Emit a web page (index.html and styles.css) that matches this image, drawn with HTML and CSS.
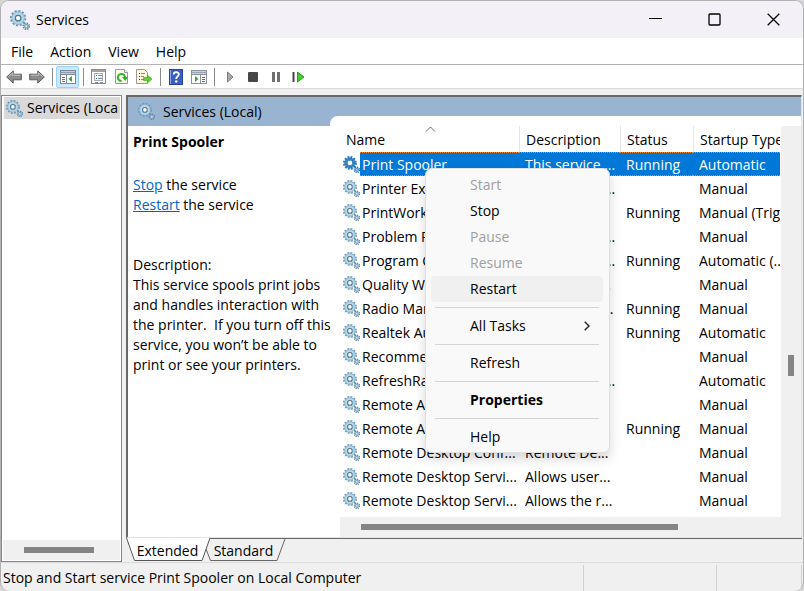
FILE: index.html
```html
<!DOCTYPE html>
<html lang="en">
<head>
    <meta charset="utf-8">
    <title>Services</title>
    <link rel="stylesheet" href="styles.css">
</head>
<body>
    <!-- shared icons -->
    <svg class="defs" width="0" height="0">
        <symbol id="gear" viewBox="0 0 16 16">
            <circle cx="6.5" cy="6.5" r="5.7" fill="none" stroke="#648fae" stroke-width="1.6" stroke-dasharray="1.7 1.28"/>
            <circle cx="6.5" cy="6.5" r="3.8" fill="#fff" stroke="#b4d8ea" stroke-width="3"/>
            <circle cx="6.5" cy="6.5" r="5" fill="none" stroke="#7ba5c1" stroke-width=".6"/>
            <circle cx="6.5" cy="6.5" r="2.2" fill="none" stroke="#54738c" stroke-width="1"/>
            <circle cx="13" cy="13" r="2.4" fill="none" stroke="#5f88a5" stroke-width="1.4" stroke-dasharray="1.1 .78"/>
            <circle cx="13" cy="13" r="1.4" fill="#dcebf4" stroke="#7fa9c4" stroke-width="1.2"/>
        </symbol>
        <symbol id="gear-selected" viewBox="0 0 16 16">
            <circle cx="6.5" cy="6.5" r="5.7" fill="none" stroke="#1f6fb4" stroke-width="1.6" stroke-dasharray="1.7 1.28"/>
            <circle cx="6.5" cy="6.5" r="3.8" fill="#fff" stroke="#4c9ad6" stroke-width="3"/>
            <circle cx="6.5" cy="6.5" r="3.8" fill="none" stroke="#1f6fb4" stroke-width="3" stroke-dasharray="1 1"/>
            <circle cx="13" cy="13" r="2.4" fill="none" stroke="#1f6fb4" stroke-width="1.4" stroke-dasharray="1.1 .78"/>
            <circle cx="13" cy="13" r="1.4" fill="#b9dbf3" stroke="#4c9ad6" stroke-width="1.2"/>
        </symbol>
        <symbol id="arrow" viewBox="0 0 16 14">
            <path d="M.7 7 7.2.9v3.3h8.1v5.6H7.2v3.3z" fill="#8c8c8c" stroke="#5c5c5c"/>
            <path d="M2.5 6.6 6.4 3v2.2h7.8" fill="none" stroke="#c4c4c4"/>
        </symbol>
    </svg>

    <div class="window">
        <header class="titlebar">
            <svg class="app-icon"><use href="#gear"/></svg>
            <h1>Services</h1>
            <div class="window-buttons">
                <button type="button" aria-label="Minimize"><svg width="13" height="13"><path d="M0 5.5h13" stroke="#000"/></svg></button>
                <button type="button" aria-label="Maximize"><svg width="13" height="13"><rect x="1" y="1" width="11" height="11" rx="1" fill="none" stroke="#000" stroke-width="1.3"/></svg></button>
                <button type="button" aria-label="Close"><svg width="13" height="13"><path d="M.7.7l11.6 11.6M12.3.7.7 12.3" stroke="#000" stroke-width="1.3"/></svg></button>
            </div>
        </header>

        <nav class="menubar">
            <button type="button">File</button>
            <button type="button">Action</button>
            <button type="button">View</button>
            <button type="button">Help</button>
        </nav>

        <div class="toolbar">
            <button type="button" aria-label="Back"><svg width="16" height="14"><use href="#arrow"/></svg></button>
            <button type="button" aria-label="Forward"><svg class="flip" width="16" height="14"><use href="#arrow"/></svg></button>
            <span class="sep"></span>
            <button type="button" class="active" aria-label="Show console tree">
                <svg width="16" height="14">
                    <rect x=".5" y=".5" width="15" height="13" fill="#fff" stroke="#7a8796"/>
                    <path d="M1 2.5h14" stroke="#8d9bab" stroke-width="2"/>
                    <path d="M1 4.5h14M6.5 5v8" stroke="#7a8796"/>
                    <path d="M2 7.5h3M2 9.5h3M2 11.5h3" stroke="#3c7cb8"/>
                    <path d="M12 6v6L8.5 9z" fill="#35ad22"/>
                </svg>
            </button>
            <span class="sep"></span>
            <button type="button" aria-label="Properties">
                <svg width="16" height="16">
                    <rect x=".5" y=".5" width="14" height="14" fill="#fff" stroke="#8a8a8a"/>
                    <path d="M1 2h13" stroke="#a5a5a5" stroke-width="2"/>
                    <rect x="3.5" y="4.5" width="8" height="7" fill="#fafafa" stroke="#a3adb8"/>
                    <path d="M5 6.5h1M5 9.5h1" stroke="#1c7ec2"/>
                    <path d="M7 6.5h4M7 9.5h4M4 13.5h3M9 13.5h3" stroke="#8a8a8a"/>
                </svg>
            </button>
            <button type="button" aria-label="Refresh">
                <svg width="14" height="16">
                    <path d="M.5.5h9l3 3v11H.5z" fill="#fffdf0" stroke="#999"/>
                    <path d="M9.5.5v3h3" fill="#fff" stroke="#999"/>
                    <path d="M6.5 12.1A3.6 3.6 0 1 1 10 8.2" fill="none" stroke="#2fb128" stroke-width="2"/>
                    <path d="M7 8h6L10.2 12z" fill="#2fb128"/>
                </svg>
            </button>
            <button type="button" aria-label="Export list">
                <svg width="17" height="16">
                    <path d="M.5.5h8l3 3v11H.5z" fill="#fff8dc" stroke="#999"/>
                    <path d="M3 4.5h1M3 7.5h1M3 10.5h1" stroke="#333"/>
                    <path d="M5 4.5h4M5 7.5h3M5 10.5h3" stroke="#8a8a8a"/>
                    <path d="M7.5 8.5h4V6l4.5 4-4.5 4v-2.5h-4z" fill="#63ce3b" stroke="#3ca41e" stroke-width=".6"/>
                </svg>
            </button>
            <span class="sep"></span>
            <button type="button" aria-label="Help">
                <svg width="14" height="16">
                    <rect x=".5" y=".5" width="13" height="15" fill="#3a5fc4" stroke="#27459c"/>
                    <path d="M1.5 1v14" stroke="#8fa8e8"/>
                    <path d="M4.7 5.5C4.7 2.4 9.8 2.4 9.8 5.3 9.8 7.4 7.2 7.3 7.2 10" fill="none" stroke="#fff" stroke-width="1.8"/>
                    <circle cx="7.2" cy="12.5" r="1.2" fill="#fff"/>
                </svg>
            </button>
            <button type="button" aria-label="Show action pane">
                <svg width="16" height="14">
                    <rect x=".5" y=".5" width="15" height="13" fill="#fff" stroke="#8a919a"/>
                    <path d="M1 2.5h14" stroke="#98a3b0" stroke-width="2"/>
                    <path d="M1 4.5h14M9.5 5v8" stroke="#8a919a"/>
                    <path d="M11 7.5h3M11 9.5h3M11 11.5h3" stroke="#3c7cb8"/>
                    <path d="M4 6v6l3.500-3z" fill="#35ad22"/>
                </svg>
            </button>
            <span class="sep"></span>
            <button type="button" aria-label="Start service"><svg width="8" height="12"><path d="M1.5 1v10L7 6z" fill="#aaa" stroke="#7c7c7c"/></svg></button>
            <button type="button" aria-label="Stop service"><svg width="10" height="10"><rect width="10" height="10" rx="1" fill="#484848"/></svg></button>
            <button type="button" aria-label="Pause service"><svg width="8" height="10"><path d="M1.5 0v10M6.5 0v10" stroke="#707070" stroke-width="3"/></svg></button>
            <button type="button" aria-label="Restart service"><svg width="13" height="12"><path d="M1.5 1v10" stroke="#444" stroke-width="2"/><path d="M5.5 1v10L12 6z" fill="#3fd02c" stroke="#2a9c1c"/></svg></button>
        </div>

        <main class="panes">
            <aside class="tree">
                <div class="tree-item"><svg class="icon"><use href="#gear"/></svg><span>Services (Local)</span></div>
                <div class="tree-space"></div>
                <div class="tree-scroll"><div class="thumb"></div></div>
            </aside>

            <section class="content">
                <div class="view">
                    <div class="view-head">
                        <h2><svg class="icon"><use href="#gear"/></svg>Services (Local)</h2>
                        <div class="notch"></div>
                    </div>

                    <div class="view-body">
                        <div class="details">
                            <h3>Print Spooler</h3>
                            <p><a href="#">Stop</a> the service<br><a href="#">Restart</a> the service</p>
                            <p class="description">Description:<br>
                                This service spools print jobs<br>
                                and handles interaction with<br>
                                the printer.&nbsp; If you turn off this<br>
                                service, you won’t be able to<br>
                                print or see your printers.</p>
                        </div>

                        <div class="list">
                            <div class="list-scroll">
                                <table>
                                    <colgroup>
                                        <col class="col-icon"><col class="col-name"><col class="col-desc"><col class="col-status"><col>
                                    </colgroup>
                                    <thead>
                                        <tr><th colspan="2" class="first">Name<svg class="sort" width="11" height="6"><path d="M1 5.5l4.500-4.500L10 5.500" fill="none" stroke="#666"/></svg></th><th>Description</th><th>Status</th><th>Startup Type</th></tr>
                                    </thead>
                                    <tbody>
                                        <tr class="selected"><td><svg class="icon"><use href="#gear-selected"/></svg></td><td>Print Spooler</td><td>This service ...</td><td>Running</td><td>Automatic</td></tr>
                                        <tr><td><svg class="icon"><use href="#gear"/></svg></td><td>Printer Extens...</td><td>This service ...</td><td></td><td>Manual</td></tr>
                                        <tr><td><svg class="icon"><use href="#gear"/></svg></td><td>PrintWorkflow...</td><td>Provides s...</td><td>Running</td><td>Manual (Trigg...</td></tr>
                                        <tr><td><svg class="icon"><use href="#gear"/></svg></td><td>Problem Rep...</td><td>This service ...</td><td></td><td>Manual</td></tr>
                                        <tr><td><svg class="icon"><use href="#gear"/></svg></td><td>Program Com...</td><td>This service ...</td><td>Running</td><td>Automatic (...</td></tr>
                                        <tr><td><svg class="icon"><use href="#gear"/></svg></td><td>Quality Wind...</td><td>Quality Win...</td><td></td><td>Manual</td></tr>
                                        <tr><td><svg class="icon"><use href="#gear"/></svg></td><td>Radio Manag...</td><td>Radio Mana...</td><td>Running</td><td>Manual</td></tr>
                                        <tr><td><svg class="icon"><use href="#gear"/></svg></td><td>Realtek Audio...</td><td>For cooper...</td><td>Running</td><td>Automatic</td></tr>
                                        <tr><td><svg class="icon"><use href="#gear"/></svg></td><td>Recommend...</td><td>Enables au...</td><td></td><td>Manual</td></tr>
                                        <tr><td><svg class="icon"><use href="#gear"/></svg></td><td>RefreshRateS...</td><td>This service ...</td><td></td><td>Automatic</td></tr>
                                        <tr><td><svg class="icon"><use href="#gear"/></svg></td><td>Remote Acc...</td><td>Creates a...</td><td></td><td>Manual</td></tr>
                                        <tr><td><svg class="icon"><use href="#gear"/></svg></td><td>Remote Acc...</td><td>Manages di...</td><td>Running</td><td>Manual</td></tr>
                                        <tr><td><svg class="icon"><use href="#gear"/></svg></td><td>Remote Desktop Conf...</td><td>Remote De...</td><td></td><td>Manual</td></tr>
                                        <tr><td><svg class="icon"><use href="#gear"/></svg></td><td>Remote Desktop Servi...</td><td>Allows user...</td><td></td><td>Manual</td></tr>
                                        <tr><td><svg class="icon"><use href="#gear"/></svg></td><td>Remote Desktop Servi...</td><td>Allows the r...</td><td></td><td>Manual</td></tr>
                                    </tbody>
                                </table>
                            </div>
                            <div class="vscroll"><div class="thumb"></div></div>
                            <div class="hscroll"><div class="thumb"></div></div>

                            <div class="context-menu" role="menu">
                                <button type="button" role="menuitem" disabled>Start</button>
                                <button type="button" role="menuitem">Stop</button>
                                <button type="button" role="menuitem" disabled>Pause</button>
                                <button type="button" role="menuitem" disabled>Resume</button>
                                <button type="button" role="menuitem" class="hover">Restart</button>
                                <hr>
                                <button type="button" role="menuitem">All Tasks<svg width="6" height="10"><path d="M.7.7 5 5 .7 9.3" fill="none" stroke="#222" stroke-width="1.4"/></svg></button>
                                <hr>
                                <button type="button" role="menuitem">Refresh</button>
                                <hr>
                                <button type="button" role="menuitem" class="default">Properties</button>
                                <hr>
                                <button type="button" role="menuitem">Help</button>
                            </div>
                        </div>
                    </div>
                </div>

                <div class="tabs">
                    <button type="button" class="tab current">
                        <svg width="86" height="24"><path d="M0 0 8 23H76L84 0z" fill="#fff"/><path d="M.5 0 8.5 22.5H76L84 0" fill="none" stroke="#555"/></svg>
                        <span>Extended</span>
                    </button>
                    <button type="button" class="tab">
                        <svg width="82" height="24"><path d="M2 10 6.5 21.5H73L81 0" fill="none" stroke="#666"/></svg>
                        <span>Standard</span>
                    </button>
                </div>
            </section>
        </main>

        <footer class="statusbar">
            <span class="status-text">Stop and Start service Print Spooler on Local Computer</span>
            <span class="status-cell"></span>
            <span class="status-cell small"></span>
        </footer>
    </div>
</body>
</html>
```

FILE: styles.css
```css
* {
    box-sizing: border-box;
}

body {
    margin: 0;
    background-color: #d6d6d6;
    font-family: "Open Sans", "Noto Sans", sans-serif;
    font-size: 14px;
    line-height: 20px;
    color: #000;
}

h1, h2, h3, p {
    margin: 0;
    font-size: 14px;
    font-weight: normal;
}

button {
    border: none;
    padding: 0;
    background: none;
    font: inherit;
    color: inherit;
}

svg {
    display: block;
    flex: none;
}

.defs {
    position: absolute;
}

.flip {
    transform: scaleX(-1);
}

.icon {
    width: 17px;
    height: 17px;
}

.window {
    display: flex;
    flex-direction: column;
    min-height: 100vh;
    border: 1px solid #b0b0b0;
    border-bottom: none;
    border-radius: 9px;
    overflow: hidden;
    background-color: #f0f0f0;
}

/* title bar */
.titlebar {
    display: flex;
    align-items: center;
    height: 37px;
    padding-left: 9px;
    background-color: #f3f0f7;
}

.app-icon {
    width: 20px;
    height: 20px;
    margin-right: 6px;
}

.window-buttons {
    display: flex;
    margin-left: auto;
}

.window-buttons button {
    display: flex;
    align-items: center;
    justify-content: center;
    width: 59px;
    height: 37px;
}

/* menu and toolbar */
.menubar {
    display: flex;
    align-items: center;
    gap: 17px;
    height: 27px;
    padding: 2px 10px 0;
    background-color: #fff;
    border-bottom: 1px solid #b4b4b4;
}

.toolbar {
    display: flex;
    align-items: center;
    height: 24px;
    padding: 1px 0 0 1px;
    background-color: #fff;
    border-bottom: 1px solid #d9d9d9;
}

.toolbar button {
    display: flex;
    align-items: center;
    justify-content: center;
    width: 23px;
    height: 22px;
}

.toolbar .active {
    border: 1px solid #99d1ff;
    border-radius: 2px;
    background-color: #cce8ff;
}

.sep {
    width: 8px;
    height: 18px;
    background: linear-gradient(#8a8a8a, #8a8a8a) center / 1px 100% no-repeat;
}

/* panes */
.panes {
    display: flex;
    flex: 1;
    gap: 4px;
    padding: 6px 1px 0 0;
}

.thumb {
    background-color: #858585;
}

.tree {
    display: flex;
    flex-direction: column;
    width: 121px;
    padding: 1px;
    border: 1px solid #828790;
    background-color: #fff;
}

.tree-item {
    display: flex;
    align-items: center;
    gap: 4px;
    height: 22px;
    margin-left: 1px;
    padding: 0 1px 0 2px;
    background-color: #d9d9d9;
    white-space: nowrap;
}

.tree-item span {
    overflow: hidden;
}

.tree-space {
    flex: 1;
}

.tree-scroll {
    height: 20px;
    padding: 7px 26px 7px 21px;
    background-color: #f0f0f0;
}

.tree-scroll .thumb {
    height: 6px;
}

.content {
    display: flex;
    flex-direction: column;
    flex: 1;
    min-width: 0;
}

.view {
    display: flex;
    flex-direction: column;
    flex: 1;
    border-top: 2px solid #696969;
    border-left: 2px solid #696969;
    border-right: 1px solid #e3e3e3;
    border-bottom: 1px solid #e3e3e3;
    background-color: #fff;
}

.view-head {
    display: flex;
    align-items: flex-end;
    height: 29px;
    background-color: #99b4d1;
}

.view-head h2 {
    display: flex;
    align-items: center;
    gap: 8px;
    width: 202px;
    height: 29px;
    padding-left: 10px;
}

.notch {
    flex: 1;
    height: 10px;
    border-top-left-radius: 8px;
    background-color: #fff;
}

.view-body {
    display: flex;
    flex: 1;
}

.details {
    width: 212px;
    padding: 6px 0 0 5px;
    white-space: nowrap;
}

.details h3 {
    margin-bottom: 23px;
    font-weight: bold;
}

.details a {
    color: #0066cc;
}

.description {
    margin-top: 40px;
}

/* service list */
.list {
    position: relative;
    display: grid;
    grid-template-columns: 1fr 20px;
    grid-template-rows: 1fr 20px;
    flex: 1;
    min-width: 0;
}

.list-scroll {
    min-width: 0;
    padding: 0 1px 3px 0;
    overflow: hidden;
}

table {
    width: 100%;
    border-collapse: separate;
    border-spacing: 0;
    table-layout: fixed;
}

.col-icon {
    width: 20px;
}

.col-name {
    width: 159px;
}

.col-desc {
    width: 101px;
}

.col-status {
    width: 73px;
}

th {
    position: relative;
    height: 26px;
    padding: 2px 0 0 6px;
    border-left: 1px solid #e5e5e5;
    font-weight: normal;
    text-align: left;
    white-space: nowrap;
    overflow: hidden;
}

th.first {
    border-left: none;
}

.sort {
    position: absolute;
    top: 0;
    left: 85px;
}

td {
    height: 24px;
    padding: 2px 0 0 6px;
    white-space: nowrap;
    overflow: hidden;
}

td:first-child {
    padding: 0 0 0 3px;
}

td:nth-child(2) {
    padding-left: 2px;
}

.selected td:not(:first-child) {
    border-top: 1px dotted #f08728;
    border-bottom: 1px dotted #f08728;
    background-color: #0078d7;
    color: #fff;
}

.vscroll {
    display: flex;
    justify-content: center;
    background-color: #f0f0f0;
}

.vscroll .thumb {
    width: 6px;
    height: 21px;
    margin-top: 229px;
}

.hscroll {
    grid-column: 1 / 3;
    padding: 7px 0 7px 21px;
    background-color: #f0f0f0;
}

.hscroll .thumb {
    width: 72%;
    height: 6px;
}

/* context menu */
.context-menu {
    position: absolute;
    top: 42px;
    left: 85px;
    display: flex;
    flex-direction: column;
    width: 185px;
    padding: 3px 6px 2px 5px;
    border: 1px solid #e0e0e0;
    border-radius: 7px;
    background-color: #f9f9f9;
    box-shadow: 0 6px 12px rgba(0, 0, 0, 0.16);
}

.context-menu button {
    display: flex;
    align-items: center;
    justify-content: space-between;
    height: 26px;
    padding: 0 13px 0 39px;
    border-radius: 4px;
}

.context-menu button:disabled {
    color: #a0a0a0;
}

.context-menu .hover {
    background-color: #f0f0f0;
}

.context-menu .default {
    font-weight: bold;
}

.context-menu hr {
    width: 164px;
    margin: 5px auto;
    border: none;
    border-top: 1px solid #d4d4d4;
}

/* tabs */
.tabs {
    display: flex;
    height: 24px;
    border-top: 1px solid #696969;
}

.tab {
    position: relative;
    width: 79px;
    height: 23px;
}

.tab svg {
    position: absolute;
    top: 0;
    left: 0;
}

.tab span {
    position: relative;
}

.tab.current {
    z-index: 1;
    margin-top: -1px;
    height: 24px;
    width: 78px;
    padding: 1px 0 0 5px;
}

/* status bar */
.statusbar {
    display: flex;
    height: 29px;
    border-top: 1px solid #dadada;
}

.status-text {
    flex: 1;
    padding: 5px 0 0 2px;
}

.status-cell {
    width: 133px;
    margin-top: 2px;
    border-left: 1px solid #d0d0d0;
}

.status-cell.small {
    width: 86px;
    margin-right: 1px;
    border-right: 1px solid #d0d0d0;
}
```
